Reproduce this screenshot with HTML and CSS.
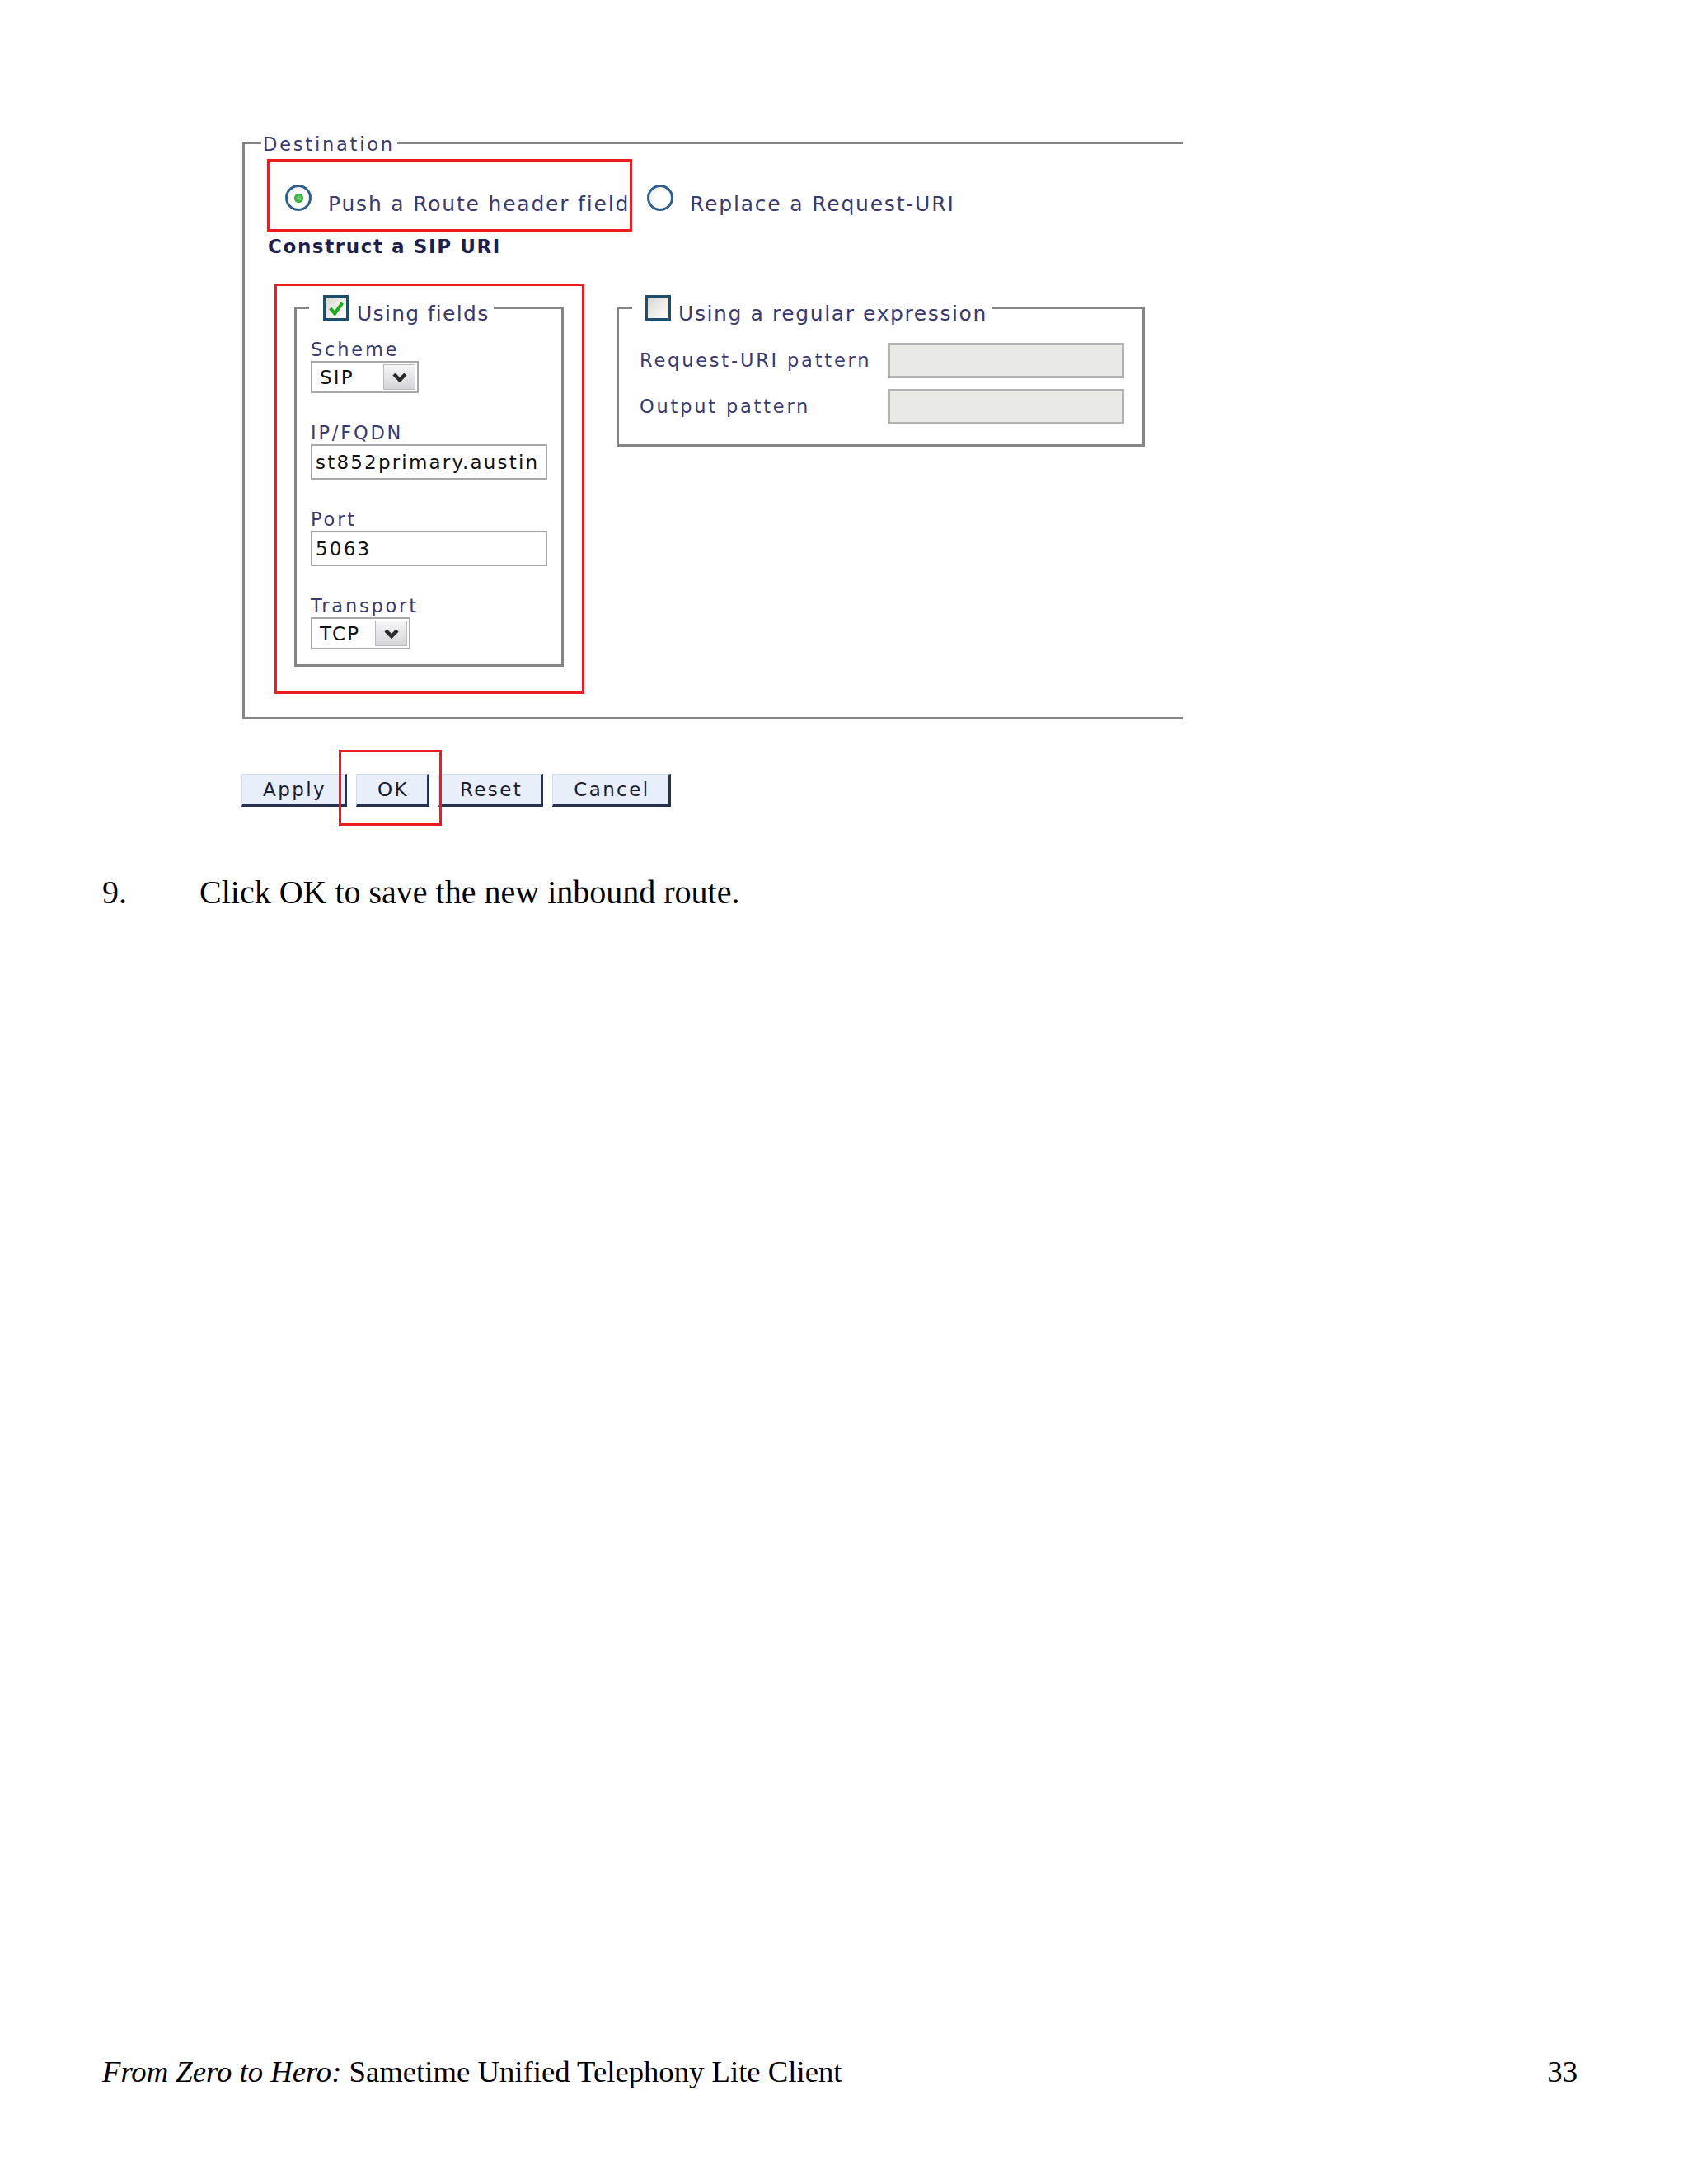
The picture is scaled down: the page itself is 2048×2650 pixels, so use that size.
FILE: index.html
```html
<!DOCTYPE html>
<html lang="en">
<head>
<meta charset="utf-8">
<title>Destination</title>
<link rel="stylesheet" href="styles.css">
</head>
<body>
<div class="page">
  <div class="form">
    <fieldset class="dest">
      <legend class="dest-legend">Destination</legend>
      <div class="opt-row">
        <div class="opt hl"><span class="radio on"></span><span class="opt-text">Push a Route header field</span></div>
        <div class="opt plain"><span class="radio"></span><span class="opt-text">Replace a Request-URI</span></div>
      </div>
      <div class="section-title">Construct a SIP URI</div>
      <div class="uri-row">
        <div class="hl-box">
          <fieldset class="sub fields">
            <legend class="sub-legend">
              <div class="lg"><span class="cb"><svg viewBox="0 0 24 24"><path d="M4 12 L10 19 L20 5" fill="none" stroke="#1ea51e" stroke-width="4.5"/></svg></span><span class="legend-text">Using fields</span></div>
            </legend>
            <div class="fields-body">
              <div class="field">
                <div class="lbl">Scheme</div>
                <div class="select scheme"><span class="sel-val">SIP</span><span class="sel-btn"><svg viewBox="0 0 20 14"><polyline points="3,3 10,10 17,3" fill="none" stroke="#2a2a2a" stroke-width="4.5"/></svg></span></div>
              </div>
              <div class="field">
                <div class="lbl">IP/FQDN</div>
                <div class="input">st852primary.austin</div>
              </div>
              <div class="field">
                <div class="lbl">Port</div>
                <div class="input">5063</div>
              </div>
              <div class="field">
                <div class="lbl">Transport</div>
                <div class="select transport"><span class="sel-val">TCP</span><span class="sel-btn"><svg viewBox="0 0 20 14"><polyline points="3,3 10,10 17,3" fill="none" stroke="#2a2a2a" stroke-width="4.5"/></svg></span></div>
              </div>
            </div>
          </fieldset>
        </div>
        <fieldset class="sub regex">
          <legend class="sub-legend">
            <div class="lg"><span class="cb"></span><span class="legend-text">Using a regular expression</span></div>
          </legend>
          <div class="regex-body">
            <div class="lbl">Request-URI pattern</div>
            <div class="input disabled"></div>
            <div class="lbl">Output pattern</div>
            <div class="input disabled"></div>
          </div>
        </fieldset>
      </div>
    </fieldset>
    <div class="buttons">
      <button class="btn">Apply</button>
      <button class="btn">OK</button>
      <button class="btn">Reset</button>
      <button class="btn">Cancel</button>
      <span class="ok-mark"></span>
    </div>
  </div>
  <p class="step"><span class="num">9.</span><span>Click OK to save the new inbound route.</span></p>
  <footer class="footer"><span><em>From Zero to Hero:</em> Sametime Unified Telephony Lite Client</span><span>33</span></footer>
</div>
</body>
</html>
```
FILE: styles.css
```css
body {
  margin: 0;
  background: #fff;
}
.page {
  width: 2048px;
  height: 2650px;
  box-sizing: border-box;
  padding-top: 159px;
  display: flex;
  flex-direction: column;
}
.form {
  padding-left: 293px;
  font-family: "DejaVu Sans", Verdana, sans-serif;
}
fieldset.dest {
  margin: 0 0 0 1px;
  padding: 0 0 28px 0;
  width: 1141px;
  box-sizing: border-box;
  border: 3px solid #858585;
  border-right: none;
  min-width: 0;
}
.dest-legend {
  margin-left: 20px;
  padding: 3px 3px 0 2px;
  font-size: 22.5px;
  line-height: 26px;
  letter-spacing: 2.8px;
  color: #3a3a6c;
}
.opt-row {
  display: flex;
  margin: 5px 0 0 27px;
}
.opt {
  display: flex;
  align-items: flex-end;
  height: 88px;
  box-sizing: border-box;
}
.opt.hl {
  border: 3px solid #ec1c24;
  padding: 0 0 22px 19px;
}
.opt.plain {
  margin-left: 18px;
  padding-bottom: 25px;
}
.radio {
  flex: none;
  width: 32px;
  height: 32px;
  box-sizing: border-box;
  border-radius: 50%;
  border: 3px solid #2e5f8a;
  background: radial-gradient(circle at 60% 60%, #ffffff 0, #ffffff 40%, #e0e0e0 100%);
  margin-right: 20px;
  display: flex;
  align-items: center;
  justify-content: center;
}
.radio.on::after {
  content: "";
  width: 11px;
  height: 11px;
  border-radius: 50%;
  background: radial-gradient(circle, #7fdc7f 0, #1f9a1f 80%);
}
.opt-text {
  font-size: 25px;
  line-height: 17px;
  letter-spacing: 1.8px;
  color: #3a3a6c;
  white-space: nowrap;
}
.section-title {
  margin: 4px 0 0 28px;
  font-weight: bold;
  font-size: 23px;
  line-height: 28px;
  letter-spacing: 1.6px;
  color: #1f1f4c;
}
.uri-row {
  display: flex;
  align-items: flex-start;
  margin: 31px 0 0 36px;
}
.hl-box {
  flex: none;
  width: 376px;
  box-sizing: border-box;
  border: 3px solid #ec1c24;
  padding: 11px 22px 30px 21px;
}
fieldset.sub {
  margin: 0;
  padding: 0;
  border: 3px solid #858585;
  min-width: 0;
  box-sizing: border-box;
}
fieldset.fields {
  width: 327px;
}
.sub-legend {
  padding: 0 5px 0 17px;
  margin-left: 15px;
}
.lg {
  display: flex;
  align-items: flex-end;
}
.cb {
  flex: none;
  width: 31px;
  height: 31px;
  box-sizing: border-box;
  border: 3px solid #1e4e6e;
  background: linear-gradient(135deg, #d8d8d2, #ffffff);
  margin-right: 10px;
  display: flex;
  align-items: center;
  justify-content: center;
}
.cb svg {
  width: 22px;
  height: 22px;
}
.legend-text {
  font-size: 25px;
  line-height: 17px;
  letter-spacing: 1.3px;
  color: #3a3a6c;
  white-space: nowrap;
}
.regex .legend-text {
  letter-spacing: 1.6px;
}
.fields-body {
  padding: 22px 0 18px 17px;
}
.lbl {
  font-size: 22.5px;
  line-height: 27px;
  letter-spacing: 2.8px;
  color: #3a3a6c;
  white-space: nowrap;
}
.field + .field {
  margin-top: 35px;
}
.select {
  display: flex;
  align-items: center;
  height: 39px;
  box-sizing: border-box;
  border: 2px solid #a8a8a8;
  background: #fff;
}
.select.scheme {
  width: 131px;
}
.select.transport {
  width: 121px;
}
.sel-val {
  padding-left: 9px;
  font-size: 23px;
  letter-spacing: 2.2px;
  color: #111;
}
.sel-btn {
  margin-left: auto;
  margin-right: 2px;
  width: 39px;
  height: 31px;
  box-sizing: border-box;
  border: 1px solid #b9b9b9;
  background: linear-gradient(#f6f6f8, #d4d4da);
  display: flex;
  align-items: center;
  justify-content: center;
}
.sel-btn svg {
  width: 20px;
  height: 14px;
}
.input {
  width: 287px;
  height: 43px;
  box-sizing: border-box;
  border: 2px solid #a8a8a8;
  background: #fff;
  display: flex;
  align-items: center;
  padding-left: 4px;
  font-size: 23px;
  letter-spacing: 2.2px;
  color: #111;
  overflow: hidden;
  white-space: nowrap;
}
.input.disabled {
  background: #e9e9e5;
  border: 3px solid #b2b2b2;
}
fieldset.regex {
  flex: none;
  width: 641px;
  margin: 14px 0 0 39px;
}
.regex .sub-legend {
  margin-left: 16px;
  padding-left: 16px;
}
.regex .cb {
  margin-right: 9px;
}
.regex-body {
  display: grid;
  grid-template-columns: 1fr 287px;
  row-gap: 13px;
  align-items: center;
  padding: 27px 22px 24px 25px;
}
.buttons {
  position: relative;
  display: flex;
  gap: 11px;
  margin-top: 66px;
}
.btn {
  height: 40px;
  box-sizing: border-box;
  padding: 0 22px 0 25px;
  margin: 0;
  font-family: "DejaVu Sans", Verdana, sans-serif;
  font-size: 23px;
  line-height: 1;
  letter-spacing: 2.4px;
  color: #1b1b2e;
  background: #e8eefa;
  border: 1px solid #d5ddeb;
  border-right: 3px solid #26324d;
  border-bottom: 3px solid #26324d;
  border-radius: 0;
}
.ok-mark {
  position: absolute;
  left: 118px;
  top: -29px;
  width: 125px;
  height: 92px;
  box-sizing: border-box;
  border: 3px solid #ec1c24;
  pointer-events: none;
}
.step {
  margin: 81px 0 0 124px;
  display: flex;
  font-family: "Liberation Serif", "Times New Roman", serif;
  font-size: 40px;
  line-height: 46px;
  color: #000;
}
.num {
  width: 118px;
}
.footer {
  margin-top: auto;
  padding: 0 134px 115px 124px;
  display: flex;
  justify-content: space-between;
  font-family: "Liberation Serif", "Times New Roman", serif;
  font-size: 36.7px;
  line-height: 42px;
  color: #000;
}
```
